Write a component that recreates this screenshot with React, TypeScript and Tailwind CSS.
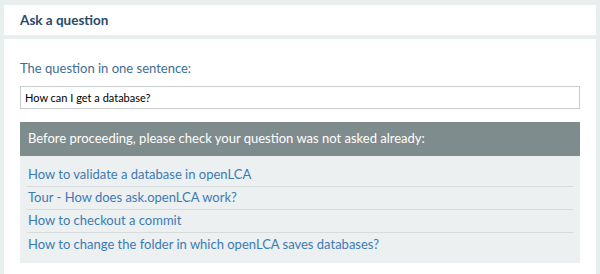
import React from "react";

const similar = [
  "How to validate a database in openLCA",
  "Tour - How does ask.openLCA work?",
  "How to checkout a commit",
  "How to change the folder in which openLCA saves databases?",
];

export default function App() {
  return (
    <div className="min-h-[274px] bg-[#e9eeee] px-1 pt-[5px] font-['Lato',sans-serif]">
      <div className="h-[30px] bg-white px-4 flex items-center">
        <h1 className="text-[13.5px] font-bold text-[#274a6b]">Ask a question</h1>
      </div>
      <div className="mt-1 bg-white px-4 pt-[19px] pb-6">
        <label className="block text-[13px] leading-[20px] text-[#3e6d94]">The question in one sentence:</label>
        <input
          className="mt-2 block h-[23px] w-full border border-[#c8cccc] px-[4px] text-[11px] text-black outline-none"
          defaultValue="How can I get a database?"
        />
        <div className="mt-[13px] h-[34px] bg-[#7f8c8d] px-2 flex items-center text-[13px] text-white">
          Before proceeding, please check your question was not asked already:
        </div>
        <ul className="bg-[#ecf0f1] px-[7px] pt-2 pb-[7px]">
          {similar.map((q, i) => (
            <li key={q} className={`h-[23px] flex items-center px-px ${i < similar.length - 1 ? "border-b border-[#d6dcdd]" : ""}`}>
              <a href="#" className="text-[13px] text-[#3d7ab4]">{q}</a>
            </li>
          ))}
        </ul>
      </div>
    </div>
  );
}
